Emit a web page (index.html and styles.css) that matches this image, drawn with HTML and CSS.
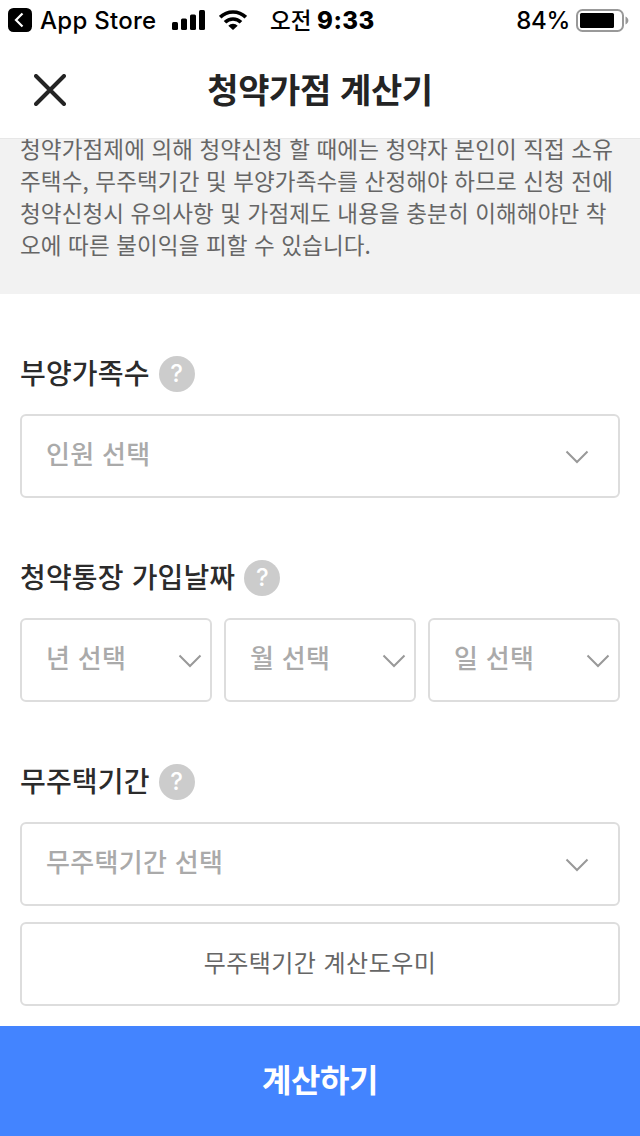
FILE: index.html
```html
<!DOCTYPE html>
<html lang="ko">
<head>
<meta charset="utf-8">
<title>청약가점 계산기</title>
<link rel="stylesheet" href="styles.css">
</head>
<body>
<div class="screen">
  <div class="status">
    <svg class="back" width="24" height="24" viewBox="0 0 24 24"><rect width="24" height="24" rx="5.5"/><path d="M14.500 5.500 8 12l6.500 6.500" fill="none" stroke="#fff" stroke-width="2.200"/></svg>
    <span class="back-label">App Store</span>
    <svg class="signal" width="34" height="20" viewBox="0 0 34 20"><rect y="12" width="6" height="8" rx="1.500"/><rect x="9" y="8.500" width="6" height="11.500" rx="1.500"/><rect x="18" y="4.500" width="6" height="15.500" rx="1.500"/><rect x="27" width="6" height="20" rx="1.500"/></svg>
    <svg class="wifi" width="28" height="20" viewBox="0 0 28 20"><g fill="none" stroke="#000" stroke-width="3.600"><path d="M1.200 7.200a18.200 18.200 0 0 1 25.600 0"/><path d="M6 12.300a11.300 11.300 0 0 1 16 0"/></g><path d="M14 20 9.300 15.700a6.700 6.700 0 0 1 9.400 0z"/></svg>
    <span class="ampm">오전</span>
    <span class="clock">9:33</span>
    <span class="percent">84%</span>
    <svg class="battery" width="53" height="23" viewBox="0 0 53 23"><rect x="1" y="1" width="46" height="21" rx="5.500" fill="none" stroke="#999" stroke-width="2"/><rect x="4" y="4" width="34" height="15" rx="1.500"/><path d="M49.500 7.500c3.800 1.500 3.800 6.500 0 8z" fill="#999"/></svg>
  </div>
  <header class="nav">
    <svg class="close" width="32" height="32" viewBox="0 0 32 32"><path d="M2 2l28 28M30 2 2 30"/></svg>
    <h1 class="title">청약가점 계산기</h1>
  </header>
  <section class="intro">
    <p class="intro-text">청약가점제에 의해 청약신청 할 때에는 청약자 본인이 직접 소유<br>주택수, 무주택기간 및 부양가족수를 산정해야 하므로 신청 전에<br>청약신청시 유의사항 및 가점제도 내용을 충분히 이해해야만 착<br>오에 따른 불이익을 피할 수 있습니다.</p>
  </section>
  <main class="form">
    <section class="field">
      <h2 class="label">부양가족수<span class="help">?</span></h2>
      <div class="select wide"><span>인원 선택</span><svg class="chevron" width="24" height="14" viewBox="0 0 24 14"><path d="M1.500 1.500 12 12 22.500 1.500"/></svg></div>
    </section>
    <section class="field">
      <h2 class="label">청약통장 가입날짜<span class="help">?</span></h2>
      <div class="row">
        <div class="select"><span>년 선택</span><svg class="chevron" width="24" height="14" viewBox="0 0 24 14"><path d="M1.500 1.500 12 12 22.500 1.500"/></svg></div>
        <div class="select"><span>월 선택</span><svg class="chevron" width="24" height="14" viewBox="0 0 24 14"><path d="M1.500 1.500 12 12 22.500 1.500"/></svg></div>
        <div class="select"><span>일 선택</span><svg class="chevron" width="24" height="14" viewBox="0 0 24 14"><path d="M1.500 1.500 12 12 22.500 1.500"/></svg></div>
      </div>
    </section>
    <section class="field">
      <h2 class="label">무주택기간<span class="help">?</span></h2>
      <div class="select wide"><span>무주택기간 선택</span><svg class="chevron" width="24" height="14" viewBox="0 0 24 14"><path d="M1.500 1.500 12 12 22.500 1.500"/></svg></div>
      <button class="helper">무주택기간 계산도우미</button>
    </section>
  </main>
  <button class="submit">계산하기</button>
</div>
</body>
</html>
```
FILE: styles.css
```css
* { box-sizing: border-box; }
body { margin: 0; background: #fff; font-family: "Noto Sans CJK KR", sans-serif; }
h1, h2, p { margin: 0; }
svg { flex: none; display: block; }
button { display: block; font-family: inherit; padding: 0; }
.screen { width: 640px; height: 1136px; display: flex; flex-direction: column; overflow: hidden; }

.status { height: 42px; flex: none; display: flex; align-items: center; padding: 0 11px 2px 8px; white-space: nowrap; color: #000; }
.back-label { margin-left: 8px; width: 118px; padding-top: 2px; font: 500 24px/40px Inter, sans-serif; letter-spacing: 0.28px; }
.signal { margin-left: 14px; }
.wifi { margin-left: 13px; }
.ampm { margin-left: 23px; width: 42px; font-size: 22.500px; font-weight: 500; line-height: 38px; padding-bottom: 2px; }
.clock { margin-left: 5px; padding-top: 2px; font: 800 24px/40px Inter, sans-serif; letter-spacing: 0.5px; }
.percent { margin-left: auto; padding-top: 2px; font: 500 24px/40px Inter, sans-serif; letter-spacing: -0.3px; }
.battery { margin-left: 6px; }

.nav { height: 96px; flex: none; display: grid; grid-template-columns: 66px 1fr 66px; align-items: center; }
.close { margin-left: 34px; }
.close path { fill: none; stroke: #242424; stroke-width: 4; stroke-linecap: round; }
.title { text-align: center; font-size: 34px; line-height: 48px; padding-bottom: 3px; font-weight: 700; letter-spacing: -0.4px; color: #242424; }

.intro { height: 156px; flex: none; background: #f2f2f2; border-top: 1px solid #e7e7e7; padding: 0 20px; }
.intro-text { margin-top: -7px; font-size: 22.500px; line-height: 32px; letter-spacing: 0.13px; color: #666; white-space: nowrap; }

.form { flex: none; height: 732px; padding: 60px 20px 0; }
.field { height: 204px; }
.label { height: 40px; display: flex; align-items: center; font-size: 28px; line-height: 36px; padding-bottom: 4px; letter-spacing: 0.15px; font-weight: 500; color: #2b2b2b; }
.help { width: 36px; height: 36px; margin: 4px 0 0 9px; border-radius: 50%; background: #ccc; color: #fff; text-align: center; font: 500 24px/36px Inter, sans-serif; }
.select { height: 84px; flex: 1; display: flex; align-items: center; justify-content: space-between; border: 2px solid #ddd; border-radius: 6px; padding: 0 8px 0 24px; font-size: 26px; font-weight: 500; letter-spacing: 0.3px; color: #aaa; }
.label + .select, .row { margin-top: 20px; }
.select span { margin-bottom: 8px; }
.wide { padding-right: 29px; }
.row { display: flex; gap: 12px; }
.chevron { margin-top: 1px; }
.chevron path { fill: none; stroke: #999; stroke-width: 2; }
.helper { width: 600px; height: 84px; margin-top: 16px; padding-bottom: 6px; border: 2px solid #ddd; border-radius: 6px; background: #fff; color: #666; font-size: 24px; letter-spacing: 0.45px; }
.submit { height: 110px; flex: none; border: 0; background: #4384ff; color: #fff; font-size: 32px; font-weight: 700; letter-spacing: -0.4px; padding-bottom: 7px; }
```
